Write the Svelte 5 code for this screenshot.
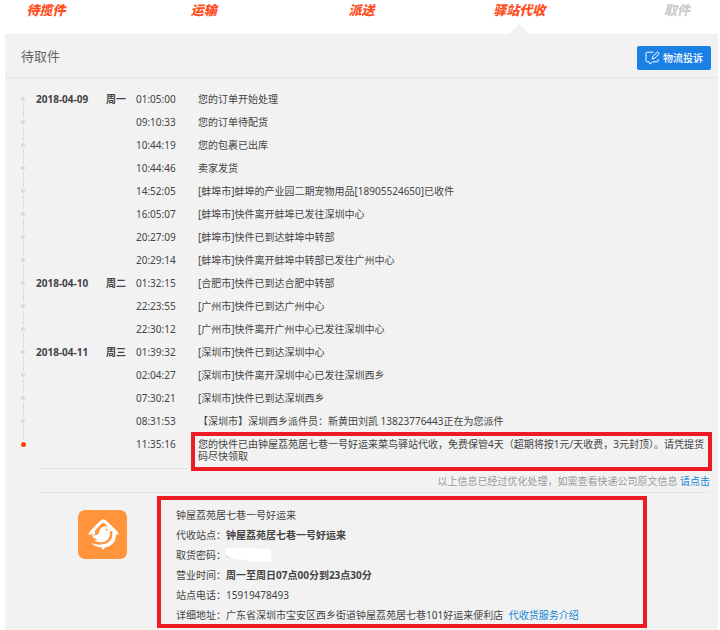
<script>
  const steps = [
    { label: '待揽件', done: true },
    { label: '运输', done: true },
    { label: '派送', done: true },
    { label: '驿站代收', done: true, current: true },
    { label: '取件', done: false }
  ];

  const events = [
    { date: '2018-04-09', day: '周一', time: '01:05:00', text: '您的订单开始处理' },
    { time: '09:10:33', text: '您的订单待配货' },
    { time: '10:44:19', text: '您的包裹已出库' },
    { time: '10:44:46', text: '卖家发货' },
    { time: '14:52:05', text: '[蚌埠市]蚌埠的产业园二期宠物用品[18905524650]已收件' },
    { time: '16:05:07', text: '[蚌埠市]快件离开蚌埠已发往深圳中心' },
    { time: '20:27:09', text: '[蚌埠市]快件已到达蚌埠中转部' },
    { time: '20:29:14', text: '[蚌埠市]快件离开蚌埠中转部已发往广州中心' },
    { date: '2018-04-10', day: '周二', time: '01:32:15', text: '[合肥市]快件已到达合肥中转部' },
    { time: '22:23:55', text: '[广州市]快件已到达广州中心' },
    { time: '22:30:12', text: '[广州市]快件离开广州中心已发往深圳中心' },
    { date: '2018-04-11', day: '周三', time: '01:39:32', text: '[深圳市]快件已到达深圳中心' },
    { time: '02:04:27', text: '[深圳市]快件离开深圳中心已发往深圳西乡' },
    { time: '07:30:21', text: '[深圳市]快件已到达深圳西乡' },
    { time: '08:31:53', text: '【深圳市】深圳西乡派件员：新黄田刘凯 13823776443正在为您派件' },
    {
      time: '11:35:16',
      text: '您的快件已由钟屋荔苑居七巷一号好运来菜鸟驿站代收，免费保管4天（超期将按1元/天收费，3元封顶）。请凭提货码尽快领取',
      latest: true
    }
  ];
</script>

<ol class="steps">
  {#each steps as step}
    <li class:done={step.done} class:current={step.current}>{step.label}</li>
  {/each}
</ol>

<main class="panel">
  <header>
    <h1>待取件</h1>
    <button type="button">
      <svg width="15" height="14" viewBox="0 0 15 14" fill="none" stroke="currentColor">
        <path d="M8.5 1.2H2.2Q1 1.2 1 2.4V9.6Q1 10.8 2.2 10.8H4L5 13L7.6 10.8H12Q13.200 10.800 13.200 9.600V8" />
        <path d="M7.200 8L8 5.400L12.400 .8L14.200 2.500L9.800 7.200Z" />
      </svg>
      <span>物流投诉</span>
    </button>
  </header>

  <ol class="timeline">
    {#each events as event}
      <li class:latest={event.latest}>
        <span class="track"><i class="dot"></i></span>
        <b>{event.date ?? ''}</b>
        <b>{event.day ?? ''}</b>
        <time>{event.time}</time>
        <p>{event.text}</p>
      </li>
    {/each}
  </ol>

  <p class="note">以上信息已经过优化处理，如需查看快递公司原文信息 <a href="#origin">请点击</a></p>

  <section class="station">
    <svg class="logo" width="49" height="49" viewBox="0 0 49 49">
      <rect width="49" height="49" rx="7" fill="#ff943b" />
      <!-- roof, then the ring under it, then the bird -->
      <path d="M10 24.500Q12 20.500 15 18L22 11Q25.300 7.600 28.600 11L36 18Q39.500 21 41 24.500H34.500V22L26.800 13.600Q25.300 12.200 23.800 13.600L17 20.500V24.500Z" fill="#fff" />
      <path d="M34.500 23.500H38Q38.500 35 27 37.500L25.300 40L23.500 37.500Q17 37 13.500 33Q21 36 28 33.500Q34.500 30.500 34.500 23.500Z" fill="#fff" />
      <path d="M14 25Q20 26.500 21.300 21.500Q22.500 16.500 27 16.300Q30.800 16.200 31.800 19.200L33.500 20.500L32 21.800Q32.300 29 27 31.500Q20.500 33.800 15.500 30Q18 30.500 19.300 29.500Q15 28.500 14 25Z" fill="#fff" />
      <circle cx="28.500" cy="19.800" r="1" fill="#ff943b" />
    </svg>

    <dl>
      <div><dt>钟屋荔苑居七巷一号好运来</dt></div>
      <div><dt>代收站点：</dt><dd><b>钟屋荔苑居七巷一号好运来</b></dd></div>
      <div>
        <dt>取货密码：</dt>
        <dd>
          <svg width="46" height="14" viewBox="0 0 46 14">
            <path d="M0 0H21L45 1V14H23L20 12L9 11L0 7Z" fill="#fff" />
            <rect x="0" y="8" width="2" height="1" fill="#f5b78c" />
          </svg>
        </dd>
      </div>
      <div><dt>营业时间：</dt><dd><b>周一至周日07点00分到23点30分</b></dd></div>
      <div><dt>站点电话：</dt><dd>15919478493</dd></div>
      <div>
        <dt>详细地址：</dt>
        <dd>广东省深圳市宝安区西乡街道钟屋荔苑居七巷101好运来便利店 <a href="#service">代收货服务介绍</a></dd>
      </div>
    </dl>
  </section>
</main>

<style>
  :global(body) {
    margin: 0;
    background: #fff;
    color: #444;
    font: 10px/12px "Noto Sans", "Noto Sans CJK SC", sans-serif;
  }

  ol,
  dl,
  dd,
  p,
  h1 {
    margin: 0;
    padding: 0;
    list-style: none;
  }

  a {
    color: #1487d4;
    text-decoration: none;
  }

  .steps {
    display: flex;
    justify-content: space-between;
    height: 34px;
    padding: 0 43px 0 46px;
    font-size: 13px;
    font-weight: 900;
    font-style: italic;
    line-height: 20px;
  }

  /* zero-width items keep the label centres evenly spaced */
  .steps li {
    position: relative;
    display: flex;
    justify-content: center;
    width: 0;
    white-space: nowrap;
    color: #ccc;
  }

  .steps .done {
    color: #ff4e1f;
  }

  .steps .current::after {
    content: "";
    position: absolute;
    bottom: 0;
    border: 10px solid transparent;
    border-top: 0;
    border-bottom-color: #f2f2f2;
  }

  .panel {
    margin: 0 2px 0 5px;
    padding-bottom: 2px;
    background: #f2f2f2;
  }

  header {
    display: flex;
    align-items: center;
    justify-content: space-between;
    height: 43px;
    padding: 0 7px 0 16px;
    border-bottom: 1px solid #e5e5e5;
  }

  h1 {
    font-size: 13px;
    font-weight: 400;
    color: #666;
  }

  button {
    display: flex;
    align-items: center;
    gap: 3px;
    height: 24px;
    margin-top: 4px;
    padding: 0 8px;
    border: 0;
    border-radius: 2px;
    background: #1b80e6;
    color: #fff;
    font: inherit;
    font-weight: 500;
  }

  .timeline {
    padding: 10px 6px 0 15px;
  }

  .timeline li {
    display: grid;
    grid-template-columns: 16px 70px 30px 55px 1fr;
    min-height: 23px;
    line-height: 23px;
  }

  .timeline p {
    padding-left: 7px;
  }

  .track {
    display: flex;
    flex-direction: column;
    align-items: center;
    gap: 2px;
    width: 6px;
    padding-top: 9px;
  }

  .track::after {
    content: "";
    flex: 1;
    width: 1px;
    margin-bottom: -7px;
    background: #dcdcdc;
  }

  .dot {
    width: 4px;
    height: 4px;
    border-radius: 50%;
    background: #d8d8d8;
  }

  .latest .dot {
    width: 5px;
    height: 5px;
    background: #ff4400;
  }

  .latest .track::after {
    display: none;
  }

  .timeline .latest p {
    position: relative;
    margin-top: -1px;
    padding: 2px 0 5px 3px;
    border: 4px solid #ed1c24;
    line-height: 12px;
  }

  .note {
    margin: -3px 8px 0 33px;
    padding-top: 2px;
    border: solid #e5e5e5;
    border-width: 1px 0;
    color: #999;
    line-height: 21px;
    text-align: right;
  }

  .station {
    display: flex;
    gap: 30px;
    padding: 3px 71px 0 73px;
  }

  .logo {
    flex-shrink: 0;
    margin-top: 14px;
  }

  dl {
    flex: 1;
    display: flex;
    flex-direction: column;
    gap: 6px;
    padding: 8px 15px 2px;
    border: 4px solid #ed1c24;
    line-height: 14px;
  }

  dl div {
    display: flex;
  }

  dd svg {
    display: block;
  }

  dd a {
    margin-left: 3px;
  }
</style>
